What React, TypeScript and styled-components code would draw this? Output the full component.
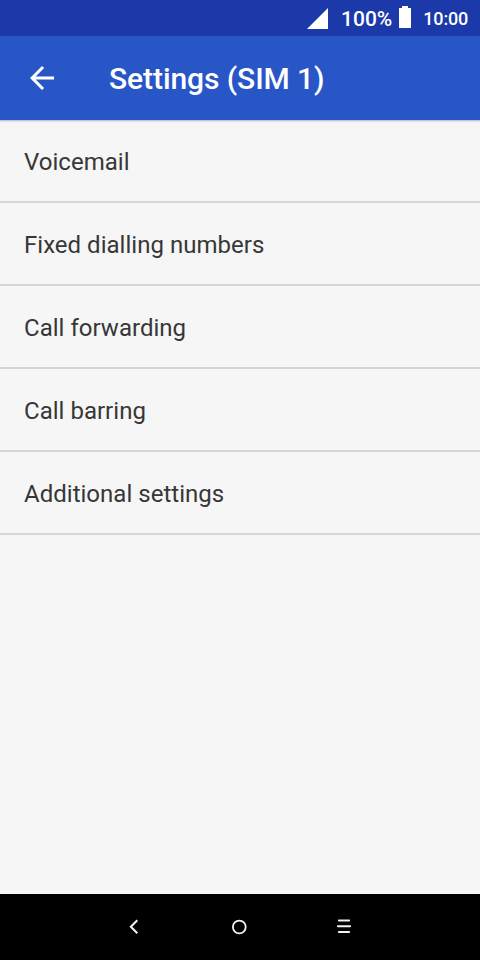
import React from 'react';
import styled, { createGlobalStyle } from 'styled-components';

const GlobalStyle = createGlobalStyle`
  * { box-sizing: border-box; }
  body { margin: 0; background: #f6f6f6; font-family: Roboto, sans-serif; }
`;
const Screen = styled.main`
  width: 480px;
  height: 960px;
  display: flex;
  flex-direction: column;
  overflow: hidden;
  background: #f6f6f6;
`;
const StatusBar = styled.div`
  flex: none;
  height: 36px;
  padding-right: 12px;
  display: flex;
  align-items: center;
  justify-content: flex-end;
  background: #1b39a8;
  color: #fff;
  font-weight: 500;
  svg { display: block; flex: none; }
`;
const Signal = styled.svg`
  margin-top: 2px;
`;
const Battery = styled.svg`
  margin-top: -2px;
`;
const Percent = styled.span`
  margin: 2px 7px 0 12px;
  font-size: 21px;
  line-height: 24px;
`;
const Clock = styled.span`
  margin: 2px 0 0 12px;
  font-size: 18px;
  line-height: 24px;
  letter-spacing: -0.2px;
`;
const AppBar = styled.header`
  flex: none;
  height: 84px;
  padding-left: 24px;
  display: flex;
  align-items: center;
  background: #2856c6;
  color: #fff;
  box-shadow: 0 1px 0 #bcc6e7, 0 2px 1px rgba(0, 0, 0, 0.08);
  z-index: 1;
`;
const BackButton = styled.button`
  width: 36px;
  height: 36px;
  padding: 0;
  border: 0;
  background: none;
  svg { display: block; }
`;
const Title = styled.h1`
  margin: 2px 0 0 49px;
  font-size: 30px;
  line-height: 36px;
  font-weight: 500;
  letter-spacing: -0.08px;
`;
const List = styled.ul`
  flex: 1;
  margin: 0;
  padding: 0;
  list-style: none;
`;
const Item = styled.li`
  height: 83px;
  padding: 3px 24px 0;
  display: flex;
  align-items: center;
  border-bottom: 2px solid #d6d6d6;
  color: #373737;
  font-size: 24px;
  line-height: 28px;
  letter-spacing: 0.02px;
`;
const NavBar = styled.nav`
  flex: none;
  height: 66px;
  padding: 0 120px 0 118px;
  display: flex;
  align-items: center;
  justify-content: space-between;
  background: #000;
  svg { display: block; }
`;

const items = ['Voicemail', 'Fixed dialling numbers', 'Call forwarding', 'Call barring', 'Additional settings'];

export default function App() {
  return (
    <Screen>
      <GlobalStyle />
      <StatusBar>
        <Signal width="22" height="22" viewBox="0 0 22 22"><path d="M0 21 21 0v21z" fill="#fff" /></Signal>
        <Percent>100%</Percent>
        <Battery width="12" height="22" viewBox="0 0 12 22"><path d="M3 0h6v2h3v20H0V2h3z" fill="#fff" /></Battery>
        <Clock>10:00</Clock>
      </StatusBar>
      <AppBar>
        <BackButton aria-label="Back">
          <svg width="36" height="36" viewBox="0 0 24 24"><path d="M20 11H7.83l5.59-5.59L12 4l-8 8 8 8 1.41-1.41L7.83 13H20v-2z" fill="#fff" /></svg>
        </BackButton>
        <Title>Settings (SIM 1)</Title>
      </AppBar>
      <List>{items.map((label) => <Item key={label}>{label}</Item>)}</List>
      <NavBar>
        <svg width="32" height="32" viewBox="0 0 32 32"><path d="m19.3 9.3-6.5 6.4 6.5 6.5" fill="none" stroke="#f2f2f2" strokeWidth="2" /></svg>
        <svg width="32" height="32" viewBox="0 0 32 32"><circle cx="16.3" cy="16" r="6.4" fill="none" stroke="#f2f2f2" strokeWidth="1.8" /></svg>
        <svg width="32" height="32" viewBox="0 0 32 32"><path d="M10.9 9.5h10.2M9.9 15.3h12.2M10.9 21h10.2" fill="none" stroke="#f2f2f2" strokeWidth="2" strokeLinecap="round" /></svg>
      </NavBar>
    </Screen>
  );
}
